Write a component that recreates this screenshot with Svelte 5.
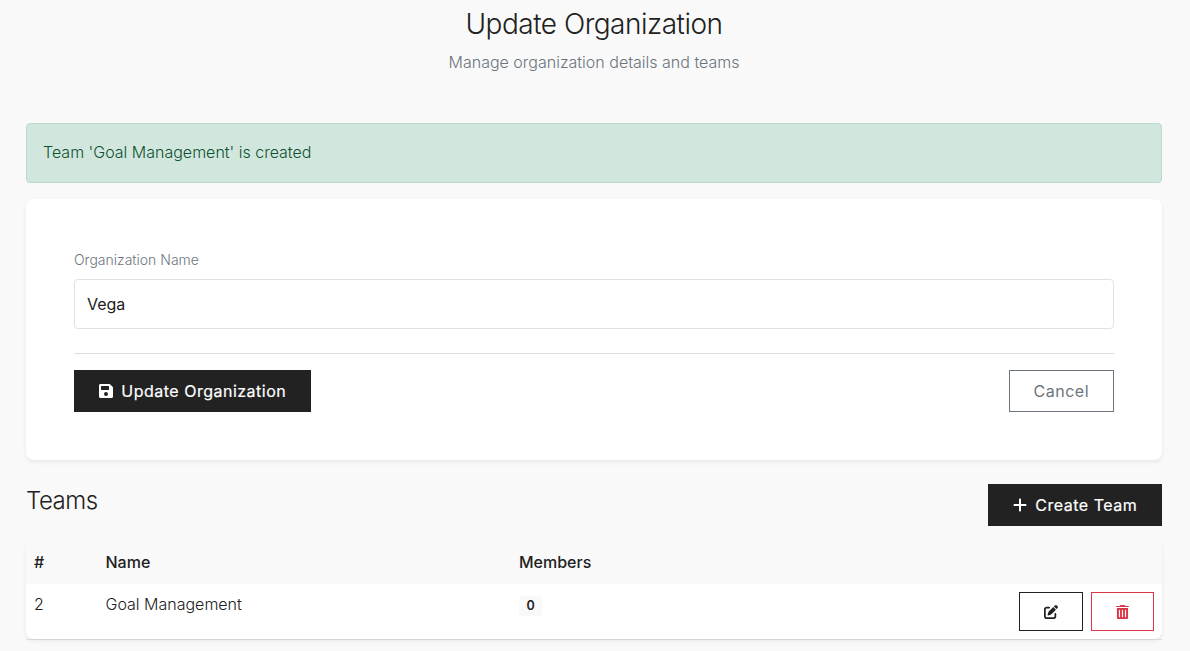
<script>
  const teams = [{ id: 2, name: 'Goal Management', members: 0 }];
  let name = $state('Vega');
</script>

<main>
  <header>
    <h1>Update Organization</h1>
    <p>Manage organization details and teams</p>
  </header>
  <div class="alert">Team 'Goal Management' is created</div>
  <section class="card">
    <label for="org">Organization Name</label>
    <input id="org" bind:value={name} />
    <div class="actions">
      <button class="btn dark">
        <svg width="14" height="16" viewBox="0 0 448 512"><path fill="currentColor" fill-rule="evenodd" d="M48 32C21.500 32 0 53.500 0 80v352c0 26.500 21.500 48 48 48h352c26.500 0 48-21.500 48-48V154c0-13-5-25-14-34l-74-74c-9-9-21-14-34-14H48zm16 80c0-9 7-16 16-16h224c9 0 16 7 16 16v96c0 9-7 16-16 16H80c-9 0-16-7-16-16v-96zm160 176a64 64 0 1 1 0 128 64 64 0 1 1 0-128z"/></svg>
        Update Organization
      </button>
      <button class="btn gray">Cancel</button>
    </div>
  </section>
  <div class="head">
    <h2>Teams</h2>
    <button class="btn dark">
      <svg width="14" height="16" viewBox="0 0 448 512"><path fill="currentColor" d="M256 80c0-17.700-14.300-32-32-32s-32 14.300-32 32v144H48c-17.700 0-32 14.300-32 32s14.300 32 32 32h144v144c0 17.700 14.300 32 32 32s32-14.300 32-32V288h144c17.700 0 32-14.300 32-32s-14.300-32-32-32H256V80z"/></svg>
      Create Team
    </button>
  </div>
  <div class="wrap">
    <div class="table">
      <div class="row th"><span>#</span><span>Name</span><span>Members</span><span></span></div>
      {#each teams as t}
        <div class="row td">
          <span>{t.id}</span><span>{t.name}</span><span><b class="badge">{t.members}</b></span>
          <span class="tools">
            <button class="sm" aria-label="Edit">
              <svg width="14" height="14" viewBox="0 0 512 512"><path fill="currentColor" d="M471.600 21.700c-21.900-21.900-57.300-21.900-79.200 0L362.300 51.700l97.900 97.900 30.100-30.100c21.900-21.900 21.900-57.300 0-79.200L471.600 21.700zm-299.200 220c-6.100 6.100-10.800 13.600-13.500 21.900l-29.600 88.800c-2.900 8.600-.6 18.100 5.800 24.600s15.900 8.700 24.600 5.800l88.800-29.600c8.200-2.700 15.700-7.400 21.900-13.500L437.700 172.300 339.700 74.300 172.400 241.700zM96 64c-53 0-96 43-96 96v256c0 53 43 96 96 96h256c53 0 96-43 96-96v-96c0-17.700-14.300-32-32-32s-32 14.300-32 32v96c0 17.700-14.300 32-32 32H96c-17.700 0-32-14.300-32-32V160c0-17.700 14.300-32 32-32h96c17.700 0 32-14.300 32-32s-14.300-32-32-32H96z"/></svg>
            </button>
            <button class="sm red" aria-label="Delete">
              <svg width="13" height="14" viewBox="0 0 448 512" preserveAspectRatio="none"><path fill="currentColor" fill-rule="evenodd" d="M135.200 17.700C140.600 6.800 151.700 0 163.800 0h120.400c12.100 0 23.200 6.800 28.600 17.700L320 32h104c13 0 24 7 24 20s-11 24-24 24H24C11 76 0 65 0 52s11-20 24-20h104l7.200-14.300zM32 112h384v352c0 26-22 48-48 48H80c-26 0-48-22-48-48V112zm88 64c-12 0-20 8-20 20v232c0 12 8 20 20 20s20-8 20-20V196c0-12-8-20-20-20zm104 0c-12 0-20 8-20 20v232c0 12 8 20 20 20s20-8 20-20V196c0-12-8-20-20-20zm104 0c-12 0-20 8-20 20v232c0 12 8 20 20 20s20-8 20-20V196c0-12-8-20-20-20z"/></svg>
            </button>
          </span>
        </div>
      {/each}
    </div>
  </div>
</main>

<style>
  :global(body) { background: #f9f9f9; }
  * { box-sizing: border-box; }
  main { height: 651px; overflow: hidden; padding: 7px 28px 0 26px; font: 300 16px/24px Inter, sans-serif; color: #212121; }
  header { text-align: center; height: 116px; }
  h1 { margin: 0 0 9px; font-size: 28px; line-height: 34px; font-weight: 300; letter-spacing: -.5px; }
  header p { margin: 0; color: #6c757d; }
  .alert { height: 60px; padding: 16px; border: 1px solid #badbcc; border-radius: 4px; background: #d1e7dd; color: #0f5132; }
  .card { height: 261px; margin-top: 16px; padding: 50px 48px; background: #fff; border-radius: 8px; box-shadow: 0 2px 4px rgba(0,0,0,.075); }
  label { display: block; font-size: 14px; line-height: 21px; margin-bottom: 9px; color: #6c757d; }
  input { display: block; width: 100%; height: 50px; padding: 0 12px; border: 1px solid #dee2e6; border-radius: 4px; font: 400 16px Inter, sans-serif; color: #212121; background: #fff; }
  .actions { display: flex; justify-content: space-between; margin-top: 24px; padding-top: 16px; border-top: 1px solid #dedede; }
  .btn { display: flex; align-items: center; justify-content: center; gap: 8.500px; height: 42px; padding: 0 24px; border: 1px solid #222; font: 400 16px Inter, sans-serif; letter-spacing: .5px; }
  .dark { padding: 0 23.750px; background: #222; color: #fff; -webkit-text-stroke: .2px #fff; }
  .gray { background: #fff; color: #6c757d; border-color: #6c757d; }
  .head { display: flex; justify-content: space-between; margin: 24px 0 16px; }
  h2 { margin: 2px 0 0; font-size: 24px; line-height: 29px; font-weight: 300; letter-spacing: -.5px; }
  .wrap { border-bottom: 1px solid #dee2e6; }
  .table { background: #fff; border-radius: 8px; box-shadow: 0 2px 4px rgba(0,0,0,.075); }
  .row { display: grid; grid-template-columns: 71.500px 413.500px 380px 1fr; padding: 8px; }
  .th { height: 42px; background: #f9f9f9; border-radius: 8px 8px 0 0; font-weight: 500; }
  .td { height: 55px; }
  .badge { display: inline-block; min-width: 23px; height: 20px; border-radius: 4px; background: #f9f9f9; font-size: 12.500px; line-height: 20px; font-weight: 600; text-align: center; }
  .tools { display: flex; justify-content: flex-end; gap: 8px; }
  .sm { display: flex; align-items: center; justify-content: center; width: 64px; height: 39px; padding: 0; background: #fff; border: 1px solid #212121; color: #212121; }
  .sm.red { width: 63px; border-color: #dc3545; color: #dc3545; }
</style>
